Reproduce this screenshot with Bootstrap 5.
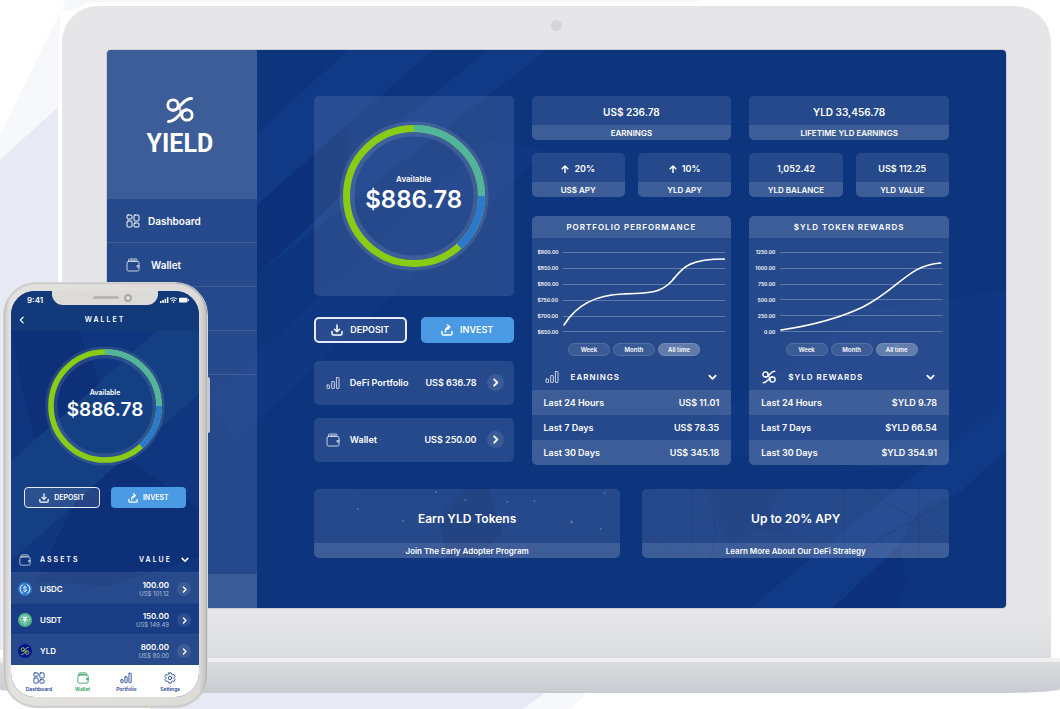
<!DOCTYPE html>
<html lang="en">
<head>
<meta charset="utf-8">
<meta name="viewport" content="width=device-width, initial-scale=1">
<title>YIELD</title>
<link href="https://cdn.jsdelivr.net/npm/bootstrap@5.3.0/dist/css/bootstrap.min.css" rel="stylesheet">
<style>
:root{--tint:rgba(255,255,255,.1);--tint-2:rgba(255,255,255,.2);--rad:5px}
body{font-family:Inter,"Liberation Sans",sans-serif;font-weight:600;font-size:9px;line-height:12px;color:#fff;background:#fff}
a{color:inherit;text-decoration:none}
button{font:inherit;color:inherit;border:0;background:none;padding:0}
svg{display:block;flex:none}
.ico{width:14px;height:14px;fill:none;stroke:currentColor;stroke-linecap:round;stroke-linejoin:round}
.ico-thin{opacity:.75}
.stage{position:relative;overflow:hidden;isolation:isolate}
.backdrop{position:absolute;inset:0;width:100%;height:100%;z-index:-1}

/* laptop */
.lid{margin:6px 9px 0 62px;padding:14px 45px 50px;border-radius:36px 36px 0 0;background:linear-gradient(#e6e6e8 0,#e6e6e8 93%,#dcdde0 100%);box-shadow:0 0 0 4px #fff}
.webcam{width:11px;height:11px;border-radius:50%;background:#d4d6da;margin-bottom:19px}
.display-pane{position:relative;isolation:isolate;overflow:hidden;border-radius:4px;background:#0d357e;box-shadow:0 0 0 1px #c9cbd0}
.deck{height:35px;border-top:4px solid #f0f0f0;background:linear-gradient(#dbdcdf,#c8ccd0);border-radius:0 0 60px 60px/0 0 4px 4px;position:relative}

.side{width:150px;background:var(--tint)}
.side-logo{height:149px;background:rgba(255,255,255,.11);gap:12px;padding-right:4px}
.side-logo span{font:700 25px/18px Roboto,sans-serif}
.side-item{height:44px;padding-left:19px;gap:8px;border-bottom:1px solid rgba(255,255,255,.12);font-size:10px}
.side-item:nth-child(2){gap:11px}
.side-foot{height:34px;background:var(--tint)}

.content{padding:46px 57px 50px;min-width:0}
.cols{display:grid;grid-template-columns:repeat(3,minmax(0,1fr));column-gap:18px}
.box{background:var(--tint);border-radius:var(--rad);overflow:hidden}
.strip{background:rgba(255,255,255,.11)}

.ring-box{aspect-ratio:1;margin-bottom:21px}
.ring{display:grid;place-items:center}
.ring>*{grid-area:1/1}
.ring svg{width:150px;height:150px}
.ring small{font-size:8px;display:block;line-height:12px;margin-top:-5px}
.ring b{font-size:24px;line-height:29px;font-weight:600;display:block}
.act{height:26px;border-radius:var(--rad);gap:7px;flex:1 1 50%}
.act-line{border:2px solid #e6ecf7;background:var(--tint)}
.act-fill{background:#4a9ae4}
.act .ico{width:12px;height:12px}
.acct{height:44px;padding:0 10px 0 12px;gap:10px}
.go{width:17px;height:17px;border-radius:50%;background:var(--tint)}
.go .ico{width:9px;height:9px}

.stat{text-align:center}
.stat-v{height:29px;padding-top:3px;font-size:9px}
.stat-lg .stat-v{font-size:10px}
.stat-k{height:15px;font-size:8px}
.panel{margin-top:19px}
.panel-h{height:22px;font-size:8px;letter-spacing:1px;background:rgba(255,255,255,.11)}
.chart{padding:6px 6px 3px;gap:5px}
.chart ul{width:20px;margin:0;padding:0;list-style:none;text-align:right;font-size:5px;line-height:16px}
.chart svg{flex:1 1 0;min-width:0;height:96px}
.ranges{gap:3px;padding-left:5px}
.pill{width:42px;height:13px;border-radius:7px;font-size:6px;line-height:11px;background:var(--tint);border:1px solid rgba(255,255,255,.12)}
.pill.on{background:rgba(255,255,255,.28)}
.fold{height:34px;padding:8px 14px 0 13px;gap:12px;letter-spacing:1px;font-size:8px}
.fold .chev{width:9px;height:9px;stroke-width:2}
.sums{width:100%}
.sums th,.sums td{height:25px;padding:0 12px;font-weight:600}
.sums tr:nth-child(odd){background:rgba(255,255,255,.11)}
.sums td{text-align:right}

.promos{gap:22px;margin-top:24px}
.promo{flex:1 1 0;text-align:center;position:relative}
.promo-art{position:absolute;inset:0;width:100%;height:100%;z-index:-1}
.promo-t{height:54px;padding-top:5px;font-size:12px}
.promo-s{height:15px;font-size:8px}

/* phone */
.phone{position:absolute;left:4px;bottom:2px;width:203px;padding:8px 8px 10px 7px;border-radius:32px;background:linear-gradient(90deg,#cfcdca,#e4e2df 3%,#dddbd8 96%,#bfbfbf);box-shadow:0 0 0 1px #d3d3d3,inset 0 0 2px #999}
.phone-key{position:absolute;left:100%;top:94px;width:3px;height:56px;background:#c6c8cd;border-radius:0 2px 2px 0}
.phone-view{position:relative;isolation:isolate;overflow:hidden;border-radius:24px;background:#0f367f}
.notch{position:absolute;left:41px;top:-1px;width:106px;height:15px;border-radius:0 0 11px 11px;background:#dddbd8}
.notch i{width:26px;height:3px;border-radius:2px;background:#b9b7b5;margin-left:14px}
.notch b{width:8px;height:8px;border-radius:50%;border:2px solid #a9a9a9;background:#ddd}
.p-status{height:18px;padding:0 10px 0 16px;font-size:8px;background:#123a7a}
.p-title{height:22px;padding:0 7px;font-size:7px;letter-spacing:2px;background:#123a7a}
.p-title span{flex:1;text-align:center;padding-right:8px}
.p-title .ico{width:8px;height:8px;stroke-width:1.5}
.phone .ring{margin:15px 0 21px}
.phone .ring svg{width:120px;height:120px}
.phone .ring small{font-size:7px;line-height:10px;margin-top:-2px}
.phone .ring b{font-size:19px;line-height:24px}
.p-acts{padding:0 13px;gap:11px}
.phone .act{height:21px;border-width:1px;border-radius:4px;font-size:7px;gap:5px}
.phone .act-fill{border:0}
.phone .act .ico{width:10px;height:10px}
.p-head{height:28px;margin-top:36px;padding:3px 10px 0 8px;gap:9px;font-size:7px;letter-spacing:2px}
.p-head .ico{width:12px;height:12px}
.p-head .chev{width:8px;height:8px;stroke-width:2}
.asset{height:31px;padding:2px 8px 0 7px;gap:8px;font-size:8px;line-height:9px;background:var(--tint);border-top:1px solid rgba(255,255,255,.04)}
.asset:nth-of-type(even){background:rgba(255,255,255,.04)}
.asset small{display:block;font-size:6px;line-height:8px;font-weight:400;opacity:.6}
.asset .go,.coin{width:14px;height:14px}
.asset .go .ico{width:7px;height:7px}
.tabs{height:32px;padding:2px 7px 0 6px;background:#fff;color:#1c4391}
.tabs a{flex:1 1 0;gap:2px;font-size:5px;line-height:6px}
.tabs .ico{width:12px;height:12px}
.tabs .now{color:#2f9e5f}
</style>
</head>
<body>
<svg width="0" height="0" class="position-absolute" aria-hidden="true">
  <symbol id="i-grid" viewBox="0 0 14 14"><rect x="1" y="1" width="5" height="4" rx="1"/><rect x="8" y="1" width="5" height="6" rx="1"/><rect x="1" y="7" width="5" height="6" rx="1"/><rect x="8" y="9" width="5" height="4" rx="1"/></symbol>
  <symbol id="i-wallet" viewBox="0 0 14 14"><rect x="1" y="3.500" width="12" height="9.500" rx="1.500"/><path d="M2.500 3.500V2q0-1 1-1H10q1 0 1 1v1.500M4 3.500V2.800h5.500M13 7.500h-2v1.500H13"/></symbol>
  <symbol id="i-bars" viewBox="0 0 14 14"><rect x="1" y="9" width="2.600" height="3.500" rx=".5"/><rect x="5.700" y="5.500" width="2.600" height="7" rx=".5"/><rect x="10.400" y="1.500" width="2.600" height="11" rx=".5"/></symbol>
  <symbol id="i-down" viewBox="0 0 12 12"><path d="M1 7.500v2q0 1.500 1.500 1.500h7q1.500 0 1.500-1.500v-2M6 1v6.500M3.500 5.300 6 7.700l2.500-2.400"/></symbol>
  <symbol id="i-up" viewBox="0 0 12 12"><path d="M1 7.500v2q0 1.500 1.500 1.500h7q1.500 0 1.500-1.500v-2M4.500 8Q4 3.500 8.500 3M6.500 1l2.300 2-2 2.300"/></symbol>
  <symbol id="i-right" viewBox="0 0 10 10"><path d="M3.500 1.500 7 5 3.500 8.500"/></symbol>
  <symbol id="i-left" viewBox="0 0 10 10"><path d="M6.500 1.500 3 5l3.500 3.500"/></symbol>
  <symbol id="i-open" viewBox="0 0 10 10"><path d="M1.500 3 5 6.500 8.500 3"/></symbol>
  <symbol id="i-rise" viewBox="0 0 8 8"><path d="M4 7.500V1M1.200 3.800 4 1l2.800 2.800"/></symbol>
  <symbol id="i-gear" viewBox="0 0 14 14"><circle cx="7" cy="7" r="2"/><path d="M5.700 1h2.600l.5 1.700 1.200.7 1.700-.5 1.300 2.300L11.800 6.400v1.300l1.200 1.200-1.300 2.200-1.700-.4-1.200.7L8.300 13H5.700l-.5-1.600-1.200-.7-1.700.4L1 8.900l1.200-1.200V6.400L1 5.200l1.300-2.300 1.700.5 1.200-.7z"/></symbol>
  <symbol id="i-yld" viewBox="0 0 28 26"><path d="M12.300 7q2.400 6 3.400 12" stroke-width="2.500" opacity=".7"/><circle cx="7" cy="8" r="5.200" stroke-width="2.800"/><circle cx="21" cy="18" r="5.200" stroke-width="2.800"/><path stroke-width="3" d="M25.500 1.600C21 1.600 18.500 4 16 6.800L11.500 11.500Q9.500 13.300 7 13.200M2.500 24.400C7 24.400 9.500 22 12 19.200L16.500 14.500Q18.500 12.700 21 12.800"/></symbol>
  <symbol id="i-ring" viewBox="0 0 150 150"><g fill="none"><circle cx="75" cy="75" r="67" stroke="#fff" stroke-opacity=".11" stroke-width="15"/><circle cx="75" cy="75" r="67.500" stroke="#89cc16" stroke-width="7"/><path d="M75 7.500A67.500 67.500 0 0 1 142.500 75" stroke="#50b59b" stroke-width="7"/><path d="M142.500 75A67.500 67.500 0 0 1 120.200 125.200" stroke="#2b79cc" stroke-width="7"/></g></symbol>
</svg>

<div class="stage min-vh-100">
  <svg class="backdrop" viewBox="0 0 1060 709" preserveAspectRatio="none" aria-hidden="true">
    <path fill="#f7f8fb" d="M66 0H700V10H60V107L0 160V135z"/>
    <path fill="#e7eaf4" d="M0 160 58 107V650H0zM150 690H550L523 709H150z"/>
    <path fill="#f7f8fb" d="M550 690h40l-20 19h-47z"/>
  </svg>

  <div class="laptop">
    <div class="lid">
      <div class="webcam mx-auto"></div>
      <div class="display-pane d-flex">
        <svg class="backdrop" viewBox="0 0 899 558" preserveAspectRatio="none" aria-hidden="true">
          <path fill="#103986" d="M150 83 241 0h85L150 155zM150 225 440 0h-60L150 190zM643 558h83L899 400V350z"/>
          <path fill="#0c3079" d="M150 155 240 75V140L150 225zM726 558 830 460l-40 98z"/>
          <path fill="#103986" d="M100 350 380 90 440 100 130 390zM560 400 760 260 899 240V360L800 420z" opacity=".6"/>
          <circle cx="855" cy="505" r="60" fill="#0d357e"/>
        </svg>
        <nav class="side d-flex flex-column">
          <div class="side-logo d-flex flex-column align-items-center justify-content-center">
            <svg class="ico" style="width:28px;height:26px"><use href="#i-yld"/></svg>
            <span>YIELD</span>
          </div>
          <div>
            <a href="#" class="side-item d-flex align-items-center"><svg class="ico"><use href="#i-grid"/></svg>Dashboard</a>
            <a href="#" class="side-item d-flex align-items-center"><svg class="ico ico-thin"><use href="#i-wallet"/></svg>Wallet</a>
            <a href="#" class="side-item d-flex" aria-label="Portfolio"></a>
            <a href="#" class="side-item d-flex" aria-label="Settings"></a>
          </div>
          <div class="side-foot mt-auto"></div>
        </nav>

        <main class="content flex-grow-1">
          <div class="cols">
            <section>
              <div class="box ring ring-box">
                <svg><use href="#i-ring"/></svg>
                <div class="text-center"><small>Available</small><b>$886.78</b></div>
              </div>
              <div class="d-flex" style="gap:14px">
                <button class="act act-line d-flex align-items-center justify-content-center"><svg class="ico" stroke-width="1.500"><use href="#i-down"/></svg>DEPOSIT</button>
                <button class="act act-fill d-flex align-items-center justify-content-center"><svg class="ico" stroke-width="1.500"><use href="#i-up"/></svg>INVEST</button>
              </div>
              <a href="#" class="box acct d-flex align-items-center" style="margin-top:18px"><svg class="ico ico-thin"><use href="#i-bars"/></svg>DeFi Portfolio<span class="ms-auto">US$ 636.78</span><span class="go d-grid" style="place-items:center"><svg class="ico" stroke-width="2"><use href="#i-right"/></svg></span></a>
              <a href="#" class="box acct d-flex align-items-center" style="margin-top:13px"><svg class="ico ico-thin"><use href="#i-wallet"/></svg>Wallet<span class="ms-auto">US$ 250.00</span><span class="go d-grid" style="place-items:center"><svg class="ico" stroke-width="2"><use href="#i-right"/></svg></span></a>
            </section>

            <section>
              <div class="box stat stat-lg">
                <div class="stat-v d-flex align-items-center justify-content-center">US$ 236.78</div>
                <div class="stat-k strip d-flex align-items-center justify-content-center">EARNINGS</div>
              </div>
              <div class="d-flex" style="gap:13px;margin-top:13px">
                <div class="box stat flex-fill w-50"><div class="stat-v d-flex align-items-center justify-content-center" style="gap:5px"><svg class="ico" style="width:8px;height:8px" stroke-width="1.500"><use href="#i-rise"/></svg>20%</div><div class="stat-k strip d-flex align-items-center justify-content-center">US$ APY</div></div>
                <div class="box stat flex-fill w-50"><div class="stat-v d-flex align-items-center justify-content-center" style="gap:5px"><svg class="ico" style="width:8px;height:8px" stroke-width="1.500"><use href="#i-rise"/></svg>10%</div><div class="stat-k strip d-flex align-items-center justify-content-center">YLD APY</div></div>
              </div>
              <div class="box panel">
                <div class="panel-h d-flex align-items-center justify-content-center">PORTFOLIO PERFORMANCE</div>
                <div class="chart d-flex">
                  <ul><li>$900.00</li><li>$850.00</li><li>$800.00</li><li>$750.00</li><li>$700.00</li><li>$650.00</li></ul>
                  <svg viewBox="0 0 163 96" preserveAspectRatio="none" fill="none"><path stroke="#fff" stroke-opacity=".27" d="M0 8.500h163M0 24.500h163M0 40.500h163M0 56.500h163M0 72.500h163M0 87.500h163"/><path stroke="#fff" stroke-width="1.600" stroke-linecap="round" d="M1 81C12 63 30 51 60 50c28-1 38-1 49-13 11-13 15-22 53-22"/></svg>
                </div>
                <div class="ranges d-flex justify-content-center"><button class="pill">Week</button><button class="pill">Month</button><button class="pill on">All time</button></div>
                <button class="fold w-100 d-flex align-items-center"><svg class="ico ico-thin"><use href="#i-bars"/></svg>EARNINGS<svg class="ico chev ms-auto"><use href="#i-open"/></svg></button>
                <table class="sums"><tbody><tr><th scope="row">Last 24 Hours</th><td>US$ 11.01</td></tr><tr><th scope="row">Last 7 Days</th><td>US$ 78.35</td></tr><tr><th scope="row">Last 30 Days</th><td>US$ 345.18</td></tr></tbody></table>
              </div>
            </section>

            <section>
              <div class="box stat stat-lg">
                <div class="stat-v d-flex align-items-center justify-content-center">YLD 33,456.78</div>
                <div class="stat-k strip d-flex align-items-center justify-content-center">LIFETIME YLD EARNINGS</div>
              </div>
              <div class="d-flex" style="gap:13px;margin-top:13px">
                <div class="box stat flex-fill w-50"><div class="stat-v d-flex align-items-center justify-content-center">1,052.42</div><div class="stat-k strip d-flex align-items-center justify-content-center">YLD BALANCE</div></div>
                <div class="box stat flex-fill w-50"><div class="stat-v d-flex align-items-center justify-content-center">US$ 112.25</div><div class="stat-k strip d-flex align-items-center justify-content-center">YLD VALUE</div></div>
              </div>
              <div class="box panel">
                <div class="panel-h d-flex align-items-center justify-content-center">$YLD TOKEN REWARDS</div>
                <div class="chart d-flex">
                  <ul><li>1250.00</li><li>1000.00</li><li>750.00</li><li>500.00</li><li>250.00</li><li>0.00</li></ul>
                  <svg viewBox="0 0 163 96" preserveAspectRatio="none" fill="none"><path stroke="#fff" stroke-opacity=".27" d="M0 8.500h163M0 24.500h163M0 40.500h163M0 55.500h163M0 71.500h163M0 87.500h163"/><path stroke="#fff" stroke-width="1.600" stroke-linecap="round" d="M1 86c34-5 61-13 82-23 35-17 45-42 78-44"/></svg>
                </div>
                <div class="ranges d-flex justify-content-center"><button class="pill">Week</button><button class="pill">Month</button><button class="pill on">All time</button></div>
                <button class="fold w-100 d-flex align-items-center"><svg class="ico"><use href="#i-yld"/></svg>$YLD REWARDS<svg class="ico chev ms-auto"><use href="#i-open"/></svg></button>
                <table class="sums"><tbody><tr><th scope="row">Last 24 Hours</th><td>$YLD 9.78</td></tr><tr><th scope="row">Last 7 Days</th><td>$YLD 66.54</td></tr><tr><th scope="row">Last 30 Days</th><td>$YLD 354.91</td></tr></tbody></table>
              </div>
            </section>
          </div>

          <div class="promos d-flex">
            <a href="#" class="box promo">
              <svg class="promo-art" viewBox="0 0 306 69" preserveAspectRatio="none" aria-hidden="true"><path fill="#0d2c72" opacity=".7" d="M125 29 152 0h22l14 44-28 25h-28z"/><g fill="#7c94c4" opacity=".5"><circle cx="122" cy="3" r="1"/><circle cx="151" cy="11" r="1"/><circle cx="193" cy="13" r="1"/><circle cx="220" cy="12" r="1"/><circle cx="257" cy="33" r="1.500"/><circle cx="290" cy="4" r="1"/><circle cx="286" cy="40" r="1"/><circle cx="89" cy="32" r="1"/><circle cx="44" cy="20" r="1"/></g></svg>
              <div class="promo-t d-flex align-items-center justify-content-center">Earn YLD Tokens</div>
              <div class="promo-s strip d-flex align-items-center justify-content-center">Join The Early Adopter Program</div>
            </a>
            <a href="#" class="box promo">
              <svg class="promo-art" viewBox="0 0 306 69" preserveAspectRatio="none" aria-hidden="true"><g stroke="#0b2b6c" fill="none" opacity=".6"><path d="M0 10 14 0M0 38l36 31M51 0 48 69M62 0q18 30 6 69M202 0v69M276 0v69M222 0l84 50M306 12 215 62M130 35l50 20"/></g><path fill="#0d2c72" opacity=".5" d="M68 0h75l-18 20 20 25-30-5-25 15-15-25z"/></svg>
              <div class="promo-t d-flex align-items-center justify-content-center">Up to 20% APY</div>
              <div class="promo-s strip d-flex align-items-center justify-content-center">Learn More About Our DeFi Strategy</div>
            </a>
          </div>
        </main>
      </div>
    </div>
    <div class="deck"></div>
  </div>

  <div class="phone">
    <div class="phone-key"></div>
    <div class="phone-view">
      <svg class="backdrop" viewBox="0 0 188 406" preserveAspectRatio="none" aria-hidden="true"><path fill="#143f83" d="M0 170 148 38h40v65L90 190 0 270z"/><path fill="#0d3078" d="M0 40h67l22 52L24 149 10 95zM65 210l50-44 75 54v45l-95 30-70-5z"/></svg>
      <div class="p-status d-flex align-items-center justify-content-between"><span>9:41</span>
        <svg width="29" height="8" viewBox="0 0 29 8" fill="#fff" aria-hidden="true"><path d="M0 5h1.500v2H0zM2.300 4h1.500v3H2.300zM4.600 2.800h1.500V7H4.600zM6.900 1.200h1.500V7H6.900z"/><path fill="none" stroke="#fff" stroke-width="1.100" d="M10 3.200q3.500-3 7 0M11.400 4.900q2.100-1.800 4.200 0"/><circle cx="13.500" cy="6.300" r=".8"/><rect x="19" y="1.800" width="8.500" height="4.700" rx="1"/><path d="M28 3.200h1v1.800h-1z"/></svg>
      </div>
      <div class="notch d-flex align-items-center justify-content-center" style="gap:5px"><i></i><b></b></div>
      <div class="p-title d-flex align-items-center"><button aria-label="Back"><svg class="ico"><use href="#i-left"/></svg></button><span>WALLET</span></div>
      <div class="ring"><svg><use href="#i-ring"/></svg><div class="text-center"><small>Available</small><b>$886.78</b></div></div>
      <div class="p-acts d-flex">
        <button class="act act-line d-flex align-items-center justify-content-center"><svg class="ico" stroke-width="1.500"><use href="#i-down"/></svg>DEPOSIT</button>
        <button class="act act-fill d-flex align-items-center justify-content-center"><svg class="ico" stroke-width="1.500"><use href="#i-up"/></svg>INVEST</button>
      </div>
      <div class="p-head d-flex align-items-center"><svg class="ico ico-thin"><use href="#i-wallet"/></svg>ASSETS<span class="ms-auto">VALUE</span><svg class="ico chev"><use href="#i-open"/></svg></div>
      <section>
        <a href="#" class="asset d-flex align-items-center"><svg class="coin" viewBox="0 0 14 14" fill="none" stroke="#fff" stroke-width=".9"><circle cx="7" cy="7" r="7" fill="#2b79cc" stroke="none"/><path d="M5.200 2.500a4.800 4.800 0 0 0 0 9M8.800 2.500a4.800 4.800 0 0 1 0 9M8.500 5.700Q8.300 4.800 7 4.800T5.500 5.900Q5.500 6.800 7 7t1.500 1.200Q8.500 9.200 7 9.200T5.500 8.300M7 3.800v1M7 9.200v1"/></svg>USDC<span class="ms-auto text-end">100.00<small>US$ 101.12</small></span><span class="go d-grid" style="place-items:center"><svg class="ico" stroke-width="2"><use href="#i-right"/></svg></span></a>
        <a href="#" class="asset d-flex align-items-center"><svg class="coin" viewBox="0 0 14 14" fill="none" stroke="#fff"><circle cx="7" cy="7" r="7" fill="#50b58b" stroke="none"/><path stroke="#c5ead9" stroke-width=".7" d="M4 3h6l2 3.500-5 5-5-5z"/><path stroke-width="1.200" d="M4.900 4.700h4.200M7 4.700V9.500M4.500 6.500q2.500 1 5 0"/></svg>USDT<span class="ms-auto text-end">150.00<small>US$ 149.49</small></span><span class="go d-grid" style="place-items:center"><svg class="ico" stroke-width="2"><use href="#i-right"/></svg></span></a>
        <a href="#" class="asset d-flex align-items-center"><svg class="coin" viewBox="0 0 14 14" fill="none" stroke="#a5dc3c"><circle cx="7" cy="7" r="7" fill="#05108c" stroke="none"/><use href="#i-yld" x="2.500" y="2.500" width="9" height="9"/></svg>YLD<span class="ms-auto text-end">800.00<small>US$ 80.00</small></span><span class="go d-grid" style="place-items:center"><svg class="ico" stroke-width="2"><use href="#i-right"/></svg></span></a>
      </section>
      <nav class="tabs d-flex">
        <a href="#" class="d-flex flex-column align-items-center justify-content-center"><svg class="ico"><use href="#i-grid"/></svg>Dashboard</a>
        <a href="#" class="now d-flex flex-column align-items-center justify-content-center"><svg class="ico"><use href="#i-wallet"/></svg>Wallet</a>
        <a href="#" class="d-flex flex-column align-items-center justify-content-center"><svg class="ico"><use href="#i-bars"/></svg>Portfolio</a>
        <a href="#" class="d-flex flex-column align-items-center justify-content-center"><svg class="ico"><use href="#i-gear"/></svg>Settings</a>
      </nav>
    </div>
  </div>
</div>
<script src="https://cdn.jsdelivr.net/npm/bootstrap@5.3.0/dist/js/bootstrap.bundle.min.js"></script>
</body>
</html>
